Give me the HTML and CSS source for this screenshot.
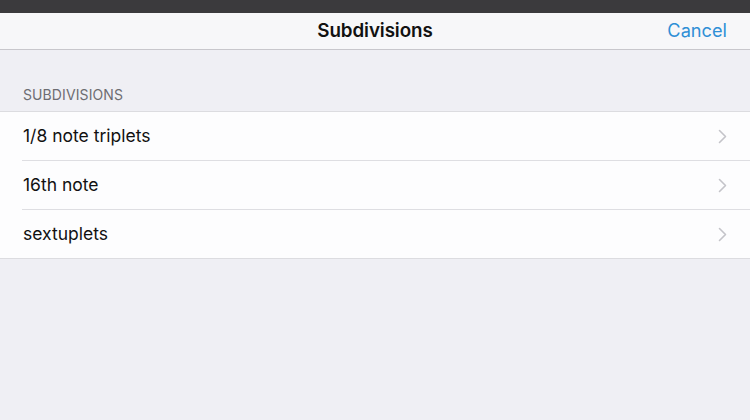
FILE: index.html
```html
<!DOCTYPE html>
<html>
<head>
<meta charset="utf-8">
<link rel="stylesheet" href="styles.css">
</head>
<body>
<div class="status"></div>
<header class="nav">
  <div class="nav-side"></div>
  <div class="nav-title">Subdivisions</div>
  <div class="nav-side right"><span class="cancel">Cancel</span></div>
</header>
<main class="content">
  <div class="section-header">SUBDIVISIONS</div>
  <ul class="table">
    <li class="row"><span class="label">1/8 note triplets</span><svg class="chev" width="9" height="15" viewBox="0 0 9 15"><path d="M1.5 1.5 L7.5 7.5 L1.5 13.5" fill="none" stroke="#c4c4c9" stroke-width="1.6" stroke-linecap="round" stroke-linejoin="round"/></svg></li>
    <li class="row"><span class="label">16th note</span><svg class="chev" width="9" height="15" viewBox="0 0 9 15"><path d="M1.5 1.5 L7.5 7.5 L1.5 13.5" fill="none" stroke="#c4c4c9" stroke-width="1.6" stroke-linecap="round" stroke-linejoin="round"/></svg></li>
    <li class="row"><span class="label">sextuplets</span><svg class="chev" width="9" height="15" viewBox="0 0 9 15"><path d="M1.5 1.5 L7.5 7.5 L1.5 13.5" fill="none" stroke="#c4c4c9" stroke-width="1.6" stroke-linecap="round" stroke-linejoin="round"/></svg></li>
  </ul>
</main>
</body>
</html>
```
FILE: styles.css
```css
* { box-sizing: border-box; }
html, body {
  margin: 0;
  padding: 0;
  width: 750px;
  height: 420px;
  overflow: hidden;
  background: #efeff4;
  font-family: "Inter", "Liberation Sans", sans-serif;
}
.status {
  height: 13px;
  background: #3b3a3d;
}
.nav {
  height: 37px;
  background: #f7f7f9;
  border-bottom: 1px solid #c8c7cc;
  display: grid;
  grid-template-columns: 1fr auto 1fr;
  align-items: center;
  padding: 0 23px;
}
.nav-side {
  display: flex;
}
.nav-side.right {
  justify-content: flex-end;
}
.nav-title {
  font-size: 18.8px;
  font-weight: 600;
  color: #111;
  letter-spacing: -0.1px;
  padding-bottom: 1px;
}
.cancel {
  font-size: 18.2px;
  color: #2f8fd6;
  padding-bottom: 2px;
}
.content {
  padding-top: 37px;
}
.section-header {
  font-size: 14px;
  color: #6d6d72;
  padding-left: 23px;
  height: 24px;
  line-height: 16px;
  letter-spacing: 0.1px;
}
.table {
  list-style: none;
  margin: 0;
  padding: 0;
  background: #fdfdfe;
  border-top: 1px solid #dcdce0;
  border-bottom: 1px solid #dcdce0;
}
.row {
  height: 49px;
  margin-left: 22px;
  padding-right: 23px;
  display: flex;
  align-items: center;
  justify-content: space-between;
  border-bottom: 1px solid #dedee2;
}
.row:last-child {
  border-bottom: none;
  height: 48px;
}
.label {
  font-size: 17.5px;
  color: #111;
  padding-left: 1px;
  padding-bottom: 2px;
}
.chev { display: block; }
```
